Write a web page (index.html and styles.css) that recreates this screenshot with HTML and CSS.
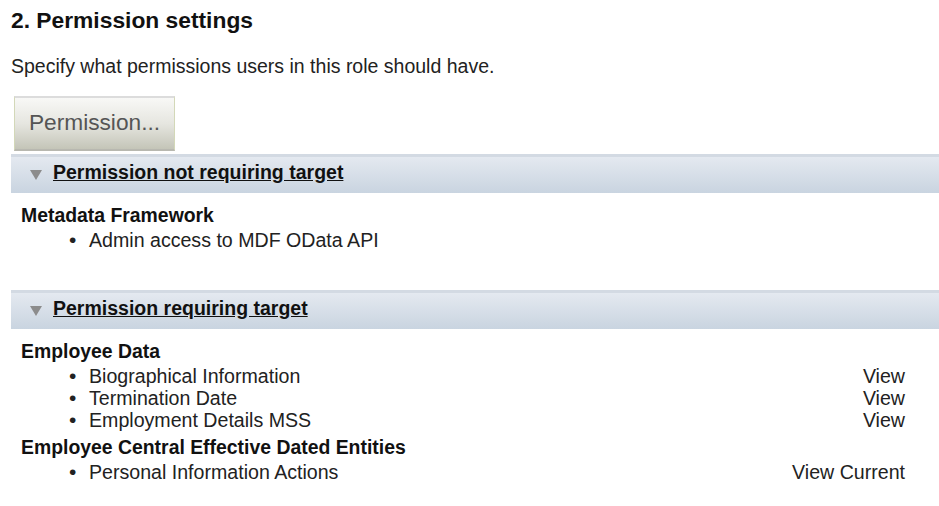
FILE: index.html
```html
<!DOCTYPE html>
<html>
<head>
<meta charset="utf-8">
<link rel="stylesheet" href="styles.css">
</head>
<body>
<div class="page">
  <h2 class="title">2. Permission settings</h2>
  <p class="desc">Specify what permissions users in this role should have.</p>
  <button class="btn">Permission...</button>

  <div class="bar"><span class="tri"></span><a class="bar-title">Permission not requiring target</a></div>
  <div class="section">
    <div class="group">Metadata Framework</div>
    <ul class="items">
      <li><span class="name">Admin access to MDF OData API</span></li>
    </ul>
  </div>

  <div class="bar bar2"><span class="tri"></span><a class="bar-title">Permission requiring target</a></div>
  <div class="section">
    <div class="group">Employee Data</div>
    <ul class="items">
      <li><span class="name">Biographical Information</span><span class="act">View</span></li>
      <li><span class="name">Termination Date</span><span class="act">View</span></li>
      <li><span class="name">Employment Details MSS</span><span class="act">View</span></li>
    </ul>
    <div class="group">Employee Central Effective Dated Entities</div>
    <ul class="items">
      <li><span class="name">Personal Information Actions</span><span class="act">View Current</span></li>
    </ul>
  </div>
</div>
</body>
</html>
```

FILE: styles.css
```css
html, body { margin: 0; padding: 0; background: #fff; }
body { font-family: "Liberation Sans", Arial, sans-serif; color: #1a1a1a; }
.page { padding: 0 0 0 11px; }
.title { font-size: 22.8px; font-weight: bold; margin: 0; padding-top: 7px; line-height: 26px; color: #111; }
.desc { font-size: 19.5px; margin: 0; padding-top: 22px; line-height: 22px; color: #222; }
.btn {
  display: block; box-sizing: border-box; margin: 19px 0 0 3px; width: 161px; height: 55px;
  font-family: "Liberation Sans", Arial, sans-serif; font-size: 22.7px; color: #555;
  border: 1px solid #d3d8b8; border-top: 2px solid #dcdcdc; border-bottom: 2px solid #b8b8b0;
  background: linear-gradient(#f8f8f6, #e6e6e0 50%, #c4c5b8);
  padding: 0 0 2px 0; text-align: center;
}
.bar {
  box-sizing: border-box; margin-top: 3px; height: 39px; border-top: 3px solid #d3dae3;
  background: linear-gradient(#e4e9f0, #c9d4e0);
  display: flex; align-items: center; padding: 0 0 6px 19px;
}
.bar2 { margin-top: 39px; }
.tri { width: 0; height: 0; border-left: 6px solid transparent; border-right: 6px solid transparent; border-top: 10px solid #8c8c8c; margin-right: 11px; margin-top: 6px; }
.bar-title { font-size: 19.5px; font-weight: bold; text-decoration: underline; color: #111; }
.section { padding-left: 10px; padding-top: 8px; }
.group { font-size: 19.4px; font-weight: bold; line-height: 28px; color: #111; }
.items + .group { margin-top: 2px; }
.items { list-style: none; margin: 0; padding: 0 34px 0 47px; font-size: 19.6px; line-height: 22px; color: #222; }
.items li { display: flex; }
.items li::before { content: "\2022"; width: 21px; flex: none; text-align: left; padding-left: 1px; box-sizing: border-box; font-size: 21px; }
.act { margin-left: auto; }
```
